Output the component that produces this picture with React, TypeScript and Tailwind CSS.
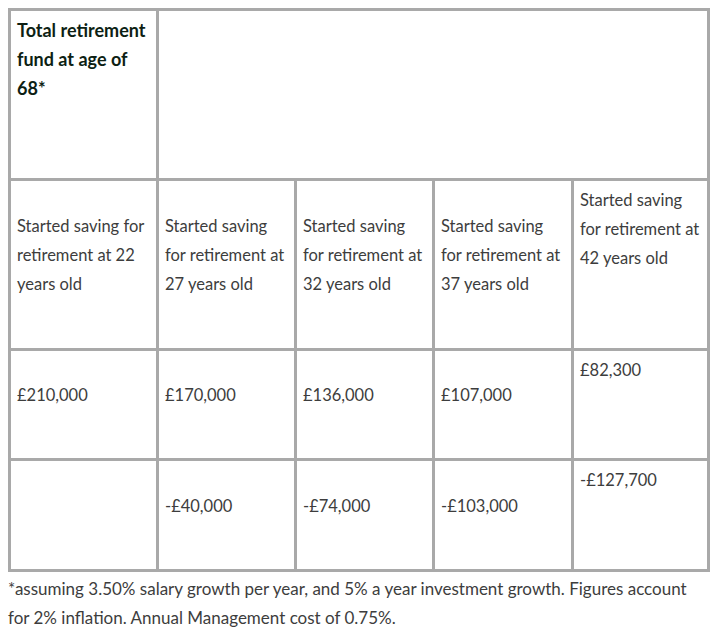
import React from 'react';

const ages = ['22', '27', '32', '37', '42'];

const headerLines = [
  ['Started saving for', 'retirement at 22', 'years old'],
  ['Started saving', 'for retirement at', '27 years old'],
  ['Started saving', 'for retirement at', '32 years old'],
  ['Started saving', 'for retirement at', '37 years old'],
  ['Started saving', 'for retirement at', '42 years old'],
];

const totals = ['£210,000', '£170,000', '£136,000', '£107,000', '£82,300'];
const differences = ['', '-£40,000', '-£74,000', '-£103,000', '-£127,700'];

const cell = 'border-[3px] border-[#a9a9a9] px-[6px] align-middle pt-[8px] pb-[26px] whitespace-nowrap';
const lastCell = 'border-[3px] border-[#a9a9a9] px-[6px] align-top pt-[5px] whitespace-nowrap';

const App = () => {
  return (
    <div
      className="bg-white p-2 text-[16.5px] leading-[29px] text-[#3d3d3d]"
      style={{ fontFamily: 'Lato, "Noto Sans", sans-serif' }}
    >
      <table className="table-fixed border-collapse w-[702px]">
        <colgroup>
          <col className="w-[148px]" />
          <col className="w-[138px]" />
          <col className="w-[138px]" />
          <col className="w-[139px]" />
          <col className="w-[136px]" />
        </colgroup>
        <tbody>
          <tr className="h-[170px]">
            <th className="border-[3px] border-[#a9a9a9] px-[6px] pt-[5px] align-top text-left text-[18px] font-bold text-[#0d1f14]">
              Total retirement
              <br />
              fund at age of
              <br />
              68*
            </th>
            <td colSpan={4} className="border-[3px] border-[#a9a9a9]"></td>
          </tr>
          <tr className="h-[170px]">
            {headerLines.map((lines, i) => (
              <td key={ages[i]} className={i === 4 ? lastCell : cell}>
                {lines[0]}
                <br />
                {lines[1]}
                <br />
                {lines[2]}
              </td>
            ))}
          </tr>
          <tr className="h-[110px]">
            {totals.map((value, i) => (
              <td key={value} className={i === 4 ? lastCell : cell}>
                {value}
              </td>
            ))}
          </tr>
          <tr className="h-[111px]">
            {differences.map((value, i) => (
              <td key={i} className={i === 4 ? lastCell : cell}>
                {value}
              </td>
            ))}
          </tr>
        </tbody>
      </table>
      <p className="pt-[2px] text-[17px]">
        *assuming 3.50% salary growth per year, and 5% a year investment growth. Figures account
        <br />
        for 2% inflation. Annual Management cost of 0.75%.
      </p>
    </div>
  );
};

export default App;
